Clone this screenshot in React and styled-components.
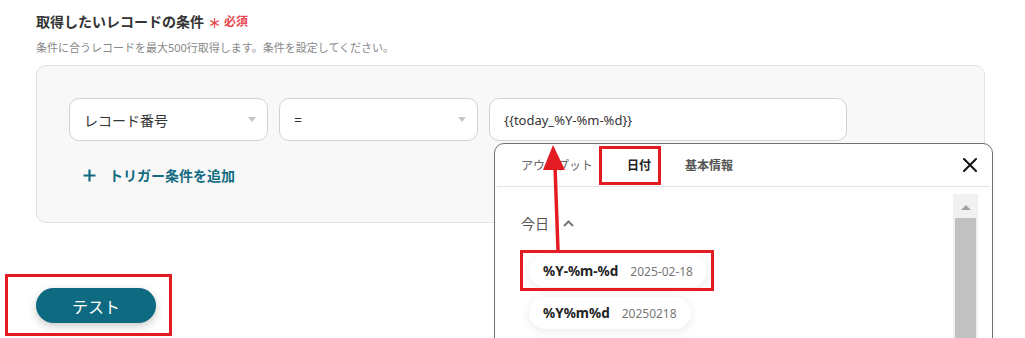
import React from 'react';
import styled, { createGlobalStyle } from 'styled-components';

const Global = createGlobalStyle`
  html, body { margin: 0; padding: 0; overflow: hidden; background: #fff; }
  body { font-family: "Noto Sans", "Noto Sans CJK JP", sans-serif; color: #333; }
  * { box-sizing: border-box; }
`;

const RED = '#e31b23';
const TEAL = '#0e6a80';

const Page = styled.div`
  position: relative;
  width: 1025px;
  height: 338px;
  overflow: hidden;
  padding: 12px 0 0 36px;
  display: flex;
  flex-direction: column;
  align-items: flex-start;
`;

const Title = styled.div`
  display: flex;
  align-items: center;
  gap: 4px;
  font-size: 14px;
  line-height: 20px;
  font-weight: 700;
  color: #333;
`;

const Required = styled.span`
  display: inline-flex;
  align-items: center;
  gap: 3px;
  color: #e8464e;
  font-size: 12px;
  font-weight: 700;
`;

const Star = styled.span`
  font-size: 13px;
  font-weight: 700;
  transform: translateY(1px);
`;

const Hint = styled.div`
  margin-top: 8px;
  font-size: 11px;
  line-height: 16px;
  color: #888;
`;

const Panel = styled.div`
  margin-top: 9px;
  width: 949px;
  background: #f8f8f8;
  border: 1px solid #e2e2e2;
  border-radius: 10px;
  padding: 32px 32px 32px 32px;
  display: flex;
  flex-direction: column;
  align-items: flex-start;
`;

const ConditionRow = styled.div`
  display: flex;
  gap: 11px;
`;

const Field = styled.div`
  position: relative;
  width: ${p => p.$w}px;
  height: 43px;
  background: #fff;
  border: 1px solid #d2d2d2;
  border-radius: 10px;
  padding: 0 11px 0 14px;
  display: flex;
  align-items: center;
  justify-content: space-between;
  font-size: ${p => p.$fs || 14}px;
  color: #333;
`;

const Caret = styled.span`
  width: 0;
  height: 0;
  border-left: 4.5px solid transparent;
  border-right: 4.5px solid transparent;
  border-top: 5px solid #c6c6c6;
`;

const AddRow = styled.div`
  margin-top: 19px;
  height: 30px;
  padding-left: 14px;
  display: flex;
  align-items: center;
  gap: 13px;
  color: #136b82;
  font-size: 14px;
  font-weight: 700;
`;

const Marked = styled.div`
  position: relative;
  display: inline-flex;
  &::after {
    content: '';
    position: absolute;
    inset: ${p => p.$inset};
    border: 3px solid ${RED};
    pointer-events: none;
    z-index: 4;
  }
`;

const TestArea = styled.div`
  margin-top: 65px;
`;

const TestButton = styled.button`
  width: 120px;
  height: 35px;
  border: none;
  border-radius: 18px;
  background: ${TEAL};
  color: #fff;
  font-family: inherit;
  font-size: 16px;
  box-shadow: 0 3px 9px rgba(0, 0, 0, 0.22);
  cursor: pointer;
`;

const Popup = styled.div`
  position: absolute;
  left: 4px;
  top: 44px;
  width: 499px;
  height: 240px;
  background: #fff;
  border: 1px solid #707070;
  border-radius: 10px;
  z-index: 3;
  display: flex;
  flex-direction: column;
`;

const TabBar = styled.div`
  height: 43px;
  margin: 0 2px;
  padding: 0 13px 0 7px;
  border-bottom: 1px solid #e3e3e3;
  display: flex;
  align-items: stretch;
`;

const Tab = styled.div`
  padding: 0 17px;
  display: flex;
  align-items: center;
  font-size: 12px;
  font-weight: ${p => p.$bold ? 700 : 400};
  color: ${p => p.$color};
`;

const CloseButton = styled.div`
  margin-left: auto;
  display: flex;
  align-items: center;
`;

const PopupBody = styled.div`
  flex: 1;
  display: flex;
  min-height: 0;
`;

const PopupContent = styled.div`
  flex: 1;
  padding: 26px 0 0 26px;
  display: flex;
  flex-direction: column;
  align-items: flex-start;
`;

const SectionHeader = styled.div`
  height: 20px;
  display: flex;
  align-items: center;
  gap: 14px;
  font-size: 14px;
  color: #555;
`;

const ChipList = styled.div`
  margin-top: 22px;
  padding-left: 8px;
  display: flex;
  flex-direction: column;
  align-items: flex-start;
  gap: 10px;
`;

const Chip = styled.div`
  height: 32px;
  padding: 0 14px;
  border-radius: 16px;
  background: #fff;
  box-shadow: 0 2px 10px rgba(0, 0, 0, 0.09);
  display: inline-flex;
  align-items: center;
  gap: 12px;
`;

const ChipName = styled.span`
  font-size: 13.5px;
  font-weight: 700;
  color: #222;
`;

const ChipValue = styled.span`
  font-size: 12px;
  color: #777;
`;

const Scrollbar = styled.div`
  width: 25px;
  margin: 7px 14px 0 0;
  background: #f1f1f1;
  padding: 0 2px;
  display: flex;
  flex-direction: column;
`;

const ScrollArrow = styled.div`
  height: 24px;
  display: flex;
  justify-content: center;
  padding-top: 11px;
  &::before {
    content: '';
    width: 0;
    height: 0;
    border-left: 5.5px solid transparent;
    border-right: 5.5px solid transparent;
    border-bottom: 5px solid #a3a3a3;
  }
`;

const ScrollThumb = styled.div`
  flex: 1;
  background: #c1c1c1;
`;

const ArrowOverlay = styled.svg`
  position: absolute;
  left: 540px;
  top: 140px;
  z-index: 10;
  pointer-events: none;
`;

const chips = [
  { name: '%Y-%m-%d', value: '2025-02-18', marked: true },
  { name: '%Y%m%d', value: '20250218' },
];

export default function App() {
  return (
    <>
      <Global />
      <Page>
        <Title>
          取得したいレコードの条件
          <Required>
            <Star>＊</Star>必須
          </Required>
        </Title>
        <Hint>条件に合うレコードを最大500行取得します。条件を設定してください。</Hint>
        <Panel>
          <ConditionRow>
            <Field $w={199}>
              レコード番号
              <Caret />
            </Field>
            <Field $w={199}>
              =
              <Caret />
            </Field>
            <Field $w={358} $fs={13}>
              {'{{today_%Y-%m-%d}}'}
              <Popup>
                <TabBar>
                  <Tab $color="#666">アウトプット</Tab>
                  <Marked $inset="2px 7px 1px -11px">
                    <Tab $bold $color="#222">日付</Tab>
                  </Marked>
                  <Tab $bold $color="#555">基本情報</Tab>
                  <CloseButton>
                    <svg width="14" height="14" viewBox="0 0 14 14">
                      <path d="M1 1L13 13M13 1L1 13" stroke="#111" strokeWidth="2" strokeLinecap="round" />
                    </svg>
                  </CloseButton>
                </TabBar>
                <PopupBody>
                  <PopupContent>
                    <SectionHeader>
                      今日
                      <svg width="11" height="7" viewBox="0 0 11 7">
                        <path d="M1 6L5.5 1.5L10 6" stroke="#777" strokeWidth="2" fill="none" />
                      </svg>
                    </SectionHeader>
                    <ChipList>
                      {chips.map(c => {
                        const chip = (
                          <Chip key={c.name}>
                            <ChipName>{c.name}</ChipName>
                            <ChipValue>{c.value}</ChipValue>
                          </Chip>
                        );
                        return c.marked ? (
                          <Marked key={c.name} $inset="-5px -7px -4px -9px">{chip}</Marked>
                        ) : chip;
                      })}
                    </ChipList>
                  </PopupContent>
                  <Scrollbar>
                    <ScrollArrow />
                    <ScrollThumb />
                  </Scrollbar>
                </PopupBody>
              </Popup>
            </Field>
          </ConditionRow>
          <AddRow>
            <svg width="13" height="13" viewBox="0 0 13 13">
              <path d="M6.5 0.5V12.5M0.5 6.5H12.5" stroke="#136b82" strokeWidth="2.2" />
            </svg>
            トリガー条件を追加
          </AddRow>
        </Panel>
        <TestArea>
          <Marked $inset="-14px -16px -13px -31px">
            <TestButton>テスト</TestButton>
          </Marked>
        </TestArea>
        <ArrowOverlay width="32" height="115" viewBox="0 0 32 115">
          <path d="M18 111L15 26" stroke={RED} strokeWidth="3.5" />
          <polygon points="13,5 3,30 25,30" fill={RED} />
        </ArrowOverlay>
      </Page>
    </>
  );
}
